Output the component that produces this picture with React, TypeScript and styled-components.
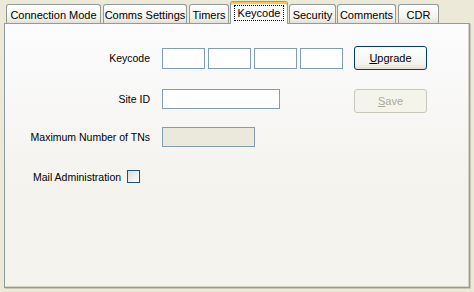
import { FC } from "react";
import styled, { createGlobalStyle } from "styled-components";

const GlobalStyle = createGlobalStyle`
  html, body {
    margin: 0;
    padding: 0;
    background: #ece9d8;
  }
  body {
    font-family: "Liberation Sans", Arial, sans-serif;
    font-size: 10.5px;
    color: #000;
  }
`;

const Window = styled.div`
  box-sizing: border-box;
  width: 474px;
  height: 292px;
  padding: 0 4px 4px 4px;
  display: flex;
  flex-direction: column;
  background: #ece9d8;
`;

const TabStrip = styled.div`
  display: flex;
  align-items: flex-end;
  height: 23px;
  padding-left: 2px;
`;

const Tab = styled.div<{ $w: number; $ml: number; $active?: boolean }>`
  box-sizing: border-box;
  width: ${(p) => p.$w}px;
  margin-left: ${(p) => p.$ml}px;
  height: ${(p) => (p.$active ? 23 : 19)}px;
  margin-bottom: ${(p) => (p.$active ? -1 : 0)}px;
  border: 1px solid #919b9c;
  border-bottom: none;
  border-radius: 3px 3px 0 0;
  text-align: center;
  white-space: nowrap;
  font-size: 11px;
  line-height: 18px;
  padding-top: ${(p) => (p.$active ? 3 : 1)}px;
  background: ${(p) =>
    p.$active ? "#fcfcfe" : "linear-gradient(#ffffff, #f3f2ec 70%, #e3e1d6)"};
  ${(p) =>
    p.$active &&
    `
    position: relative;
    z-index: 1;
    border-top: 1px solid #e68b2c;
    box-shadow: inset 0 2px 0 #ffc73c;
    line-height: 14px;
  `}
`;

const FocusRect = styled.span`
  display: inline-block;
  border: 1px dotted #000;
  padding: 0 3px;
  line-height: 14px;
`;

const Panel = styled.div`
  flex: 1;
  border: 1px solid #919b9c;
  background: linear-gradient(#fcfcfe, #f4f3ee 60%, #f4f3ee);
  box-shadow: 1px 1px 0 #c9c7ba, inset -1px -1px 0 #d6d3c6;
  display: flex;
  flex-direction: column;
`;

const Row = styled.div<{ $mt: number; $align?: string }>`
  display: grid;
  grid-template-columns: 146px 181px 73px;
  column-gap: 11px;
  align-items: ${(p) => p.$align ?? "start"};
  margin-top: ${(p) => p.$mt}px;
`;

const Label = styled.div`
  text-align: right;
  padding-right: 1px;
  line-height: 20px;
  white-space: nowrap;
`;

const KeyGroup = styled.div`
  display: flex;
  gap: 3px;
`;

const TextBox = styled.div<{ $w: number; $h?: number; $disabled?: boolean }>`
  box-sizing: border-box;
  width: ${(p) => p.$w}px;
  height: ${(p) => p.$h ?? 20}px;
  border: 1px solid #7f9db9;
  background: ${(p) => (p.$disabled ? "#ebe9db" : "#fff")};
`;

const Button = styled.div<{ $disabled?: boolean }>`
  box-sizing: border-box;
  width: 73px;
  height: 24px;
  border-radius: 3px;
  border: 1px solid ${(p) => (p.$disabled ? "#c9c7ba" : "#003c74")};
  background: ${(p) =>
    p.$disabled ? "#f5f4ea" : "linear-gradient(#ffffff, #f4f3ee 75%, #e3e0d4)"};
  color: ${(p) => (p.$disabled ? "#aca899" : "#000")};
  font-size: 11px;
  display: flex;
  align-items: center;
  justify-content: center;
  u {
    text-decoration: underline;
  }
`;

const MailRow = styled.div`
  display: flex;
  align-items: center;
  gap: 6px;
  padding-left: 28px;
  margin-top: 23px;
`;

const Check = styled.div`
  box-sizing: border-box;
  width: 13px;
  height: 13px;
  border: 1px solid #1c5180;
  background: linear-gradient(135deg, #dcdcd7, #ffffff);
`;

const tabs = [
  { label: "Connection Mode", w: 95, ml: 0 },
  { label: "Comms Settings", w: 84, ml: 2 },
  { label: "Timers", w: 40, ml: 2 },
  { label: "Keycode", w: 58, ml: 1, active: true },
  { label: "Security", w: 47, ml: 1 },
  { label: "Comments", w: 59, ml: 1 },
  { label: "CDR", w: 41, ml: 2 },
];

const App: FC = () => {
  return (
    <>
      <GlobalStyle />
      <Window>
        <TabStrip>
          {tabs.map((t) => (
            <Tab key={t.label} $w={t.w} $ml={t.ml} $active={t.active}>
              {t.active ? <FocusRect>{t.label}</FocusRect> : t.label}
            </Tab>
          ))}
        </TabStrip>
        <Panel>
          <Row $mt={22} $align="center">
            <Label>Keycode</Label>
            <KeyGroup>
              <TextBox $w={43} $h={21} />
              <TextBox $w={43} $h={21} />
              <TextBox $w={43} $h={21} />
              <TextBox $w={43} $h={21} />
            </KeyGroup>
            <Button>
              <span>
                <u>U</u>pgrade
              </span>
            </Button>
          </Row>
          <Row $mt={19}>
            <Label>Site ID</Label>
            <TextBox $w={118} />
            <Button $disabled>
              <span>
                <u>S</u>ave
              </span>
            </Button>
          </Row>
          <Row $mt={14}>
            <Label>Maximum Number of TNs</Label>
            <TextBox $w={93} $disabled />
          </Row>
          <MailRow>
            <span>Mail Administration</span>
            <Check />
          </MailRow>
        </Panel>
      </Window>
    </>
  );
};

export default App;
